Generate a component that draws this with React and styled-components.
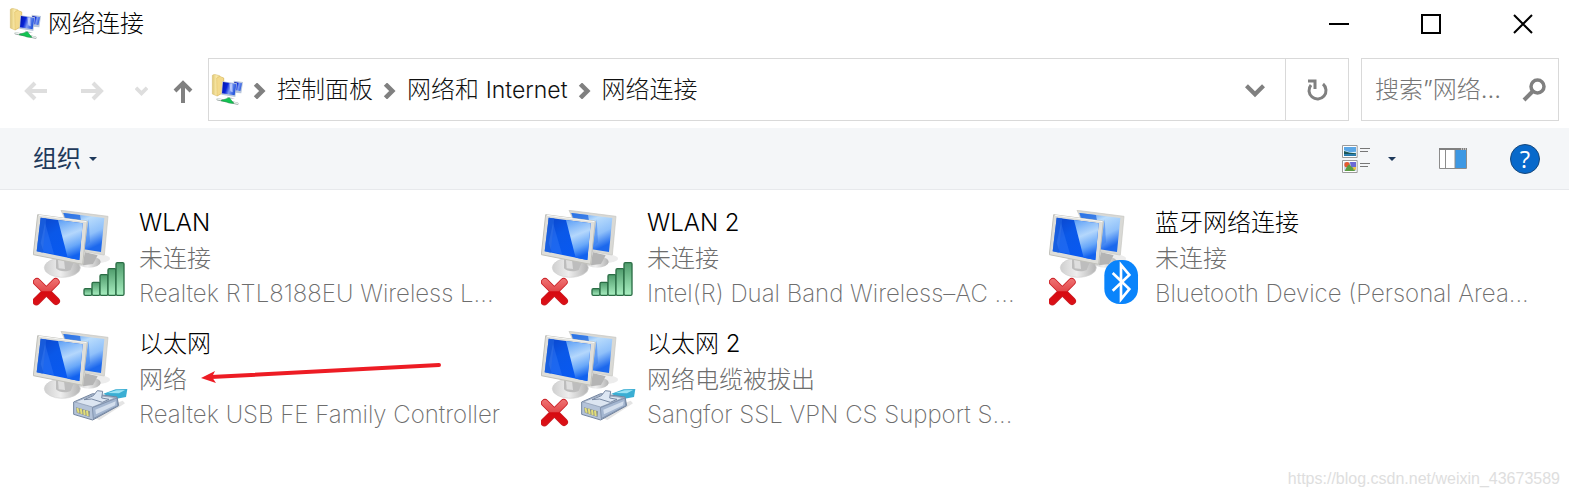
import React from "react";
import styled, { createGlobalStyle } from "styled-components";

const GlobalStyle = createGlobalStyle`
  *, *::before, *::after { box-sizing: border-box; }
  body {
    margin: 0;
    background: #fff;
    color: #000;
    font-family: Inter, "Noto Sans CJK SC", sans-serif;
    font-size: 24px;
    font-weight: 300;
  }
`;

const Window = styled.div`
  display: flex;
  flex-direction: column;
  min-height: 100vh;
`;

const TitleBar = styled.header`
  display: flex;
  align-items: center;
  height: 48px;
  padding-left: 9px;
  gap: 7px;
`;

const Title = styled.h1`
  flex: 1;
  margin: 0;
  font-size: 24px;
  font-weight: 300;
  line-height: 36px;
`;

const PlainButton = styled.button`
  display: flex;
  align-items: center;
  justify-content: center;
  flex: none;
  width: ${(p) => p.$width}px;
  height: 100%;
  padding: 0;
  border: 0;
  background: none;
  color: ${(p) => p.$color || "#808080"};
  font: inherit;
`;

const WindowControls = styled.div`
  display: flex;
  height: 100%;
`;

const NavBar = styled.nav`
  display: flex;
  height: 63px;
  margin: 10px 10px 7px 0;
`;

const History = styled.div`
  display: flex;
  align-items: center;
  padding: 2px 1px 0 7px;
`;

const AddressBar = styled.div`
  display: flex;
  align-items: center;
  flex: 1;
  min-width: 0;
  border: 1px solid #d9d9d9;
  margin-right: 12px;
`;

const Crumbs = styled.ol`
  display: flex;
  align-items: center;
  flex: 1;
  margin: 0;
  padding: 0 0 0 2px;
  list-style: none;
`;

const Crumb = styled.li`
  display: flex;
  align-items: center;
`;

const CrumbArrow = styled.span`
  display: flex;
  justify-content: center;
  width: 34px;
  padding-top: 2px;
`;

const CrumbLink = styled.a`
  color: #111;
  line-height: 36px;
  text-decoration: none;
  white-space: nowrap;
`;

const RefreshSlot = styled.div`
  height: 100%;
  border-left: 1px solid #d9d9d9;
`;

const SearchBox = styled.label`
  display: flex;
  align-items: center;
  width: 198px;
  padding-left: 13px;
  border: 1px solid #d9d9d9;
`;

const SearchInput = styled.input`
  flex: 1;
  min-width: 0;
  padding: 0;
  border: 0;
  outline: 0;
  background: none;
  font: inherit;
  &::placeholder { color: #767676; opacity: 1; }
`;

const Toolbar = styled.div`
  display: flex;
  align-items: center;
  justify-content: space-between;
  height: 62px;
  padding: 0 12px 0 33px;
  border-bottom: 1px solid #e7e9ec;
  background: #f4f6f8;
`;

const OrganizeButton = styled.button`
  display: flex;
  align-items: center;
  gap: 8px;
  padding: 0;
  border: 0;
  background: none;
  color: #1e395b;
  font: inherit;
  font-weight: 400;
  line-height: 36px;
`;

const ToolGroup = styled.div`
  display: flex;
  align-items: center;
  height: 100%;
`;

const ConnectionGrid = styled.ul`
  display: grid;
  grid-template-columns: repeat(3, 1fr);
  row-gap: 13px;
  margin: 0;
  padding: 15px 12px 0 33px;
  list-style: none;
`;

const Connection = styled.li`
  display: flex;
  position: relative;
  gap: 10px;
  min-width: 0;
`;

const IconSlot = styled.div`
  flex: none;
  width: 96px;
  padding-top: 5px;
`;

const Details = styled.div`
  min-width: 0;
  line-height: 36px;
  white-space: nowrap;
`;

const Name = styled.div`
  color: #000;
`;

const Info = styled.div`
  color: #6d6d6d;
`;

const Device = styled(Info)`
  font-weight: 200;
  line-height: 34px;
  padding-bottom: 2px;
`;

const Latin = styled.span`
  font-size: 23px;
`;

const ArrowOverlay = styled.svg`
  position: absolute;
  left: 164px;
  top: 32px;
`;

const Watermark = styled.footer`
  margin-top: auto;
  padding: 0 9px 8px;
  color: #dedede;
  font-family: "Liberation Sans", Arial, sans-serif;
  font-size: 16px;
  font-weight: 400;
  line-height: 20px;
  text-align: right;
`;

function FolderNetworkIcon() {
  return (
    <svg width="32" height="32" viewBox="0 0 96 96" aria-hidden="true">
      <defs>
        <linearGradient id="folder" x1="0" x2="1">
          <stop offset="0" stopColor="#ddc675" />
          <stop offset=".35" stopColor="#fbeaa9" />
          <stop offset="1" stopColor="#d9b85c" />
        </linearGradient>
        <linearGradient id="miniScreen" x1="0" y1="0" x2="1" y2=".3">
          <stop offset="0" stopColor="#0713a4" />
          <stop offset=".4" stopColor="#0624d8" />
          <stop offset=".65" stopColor="#7f9cf4" />
          <stop offset="1" stopColor="#2757dd" />
        </linearGradient>
      </defs>
      <path d="M4 4 10 1 26 5 27 10 38 12 39 55 18 66 4 60Z" fill="url(#folder)" stroke="#d5bb6d" strokeWidth="1.5" />
      <path d="M17 12 27 7 38 12 38 54 18 66Z" fill="#f3da8c" stroke="#cfaa4c" strokeWidth="1" />
      <path d="M68 20 96 24 91 58 70 56Z" fill="#b9c6dc" />
      <path d="M70 24 93 28 88 51 70 48Z" fill="url(#miniScreen)" />
      <path d="M34 22 78 28 73 69 31 62Z" fill="#b9c6dc" />
      <path d="M36 24 76 30 71 64 33 58Z" fill="url(#miniScreen)" />
      <path d="M55 28 64 29 65 55 58 52Z" fill="#dfe7ff" opacity=".65" />
      <path d="m48 68 14 3 10 3-22 1Z" fill="#c2c7ce" />
      <path d="m20 76 25 5 34 8" fill="none" stroke="#9ca8a4" strokeWidth="7" strokeLinecap="round" />
      <path d="m20 75 10 2M70 86l9 2" stroke="#edf4f1" strokeWidth="4" strokeLinecap="round" />
      <path d="m30 80 25-9 13 17-14-1-6-3Z" fill="#12c452" stroke="#079a3c" strokeWidth="1.5" />
    </svg>
  );
}

function ComputersIcon({ badge, offline }) {
  return (
    <svg width="96" height="96" viewBox="39 30 288 288" display="block" aria-hidden="true">
      <defs>
        <linearGradient id="screenDark" x1="0" y1="0" x2=".8" y2="1">
          <stop offset="0" stopColor="#0a43c8" />
          <stop offset=".4" stopColor="#0a58e8" />
          <stop offset="1" stopColor="#0759f5" />
        </linearGradient>
        <linearGradient id="screenLight" x1="0" y1="0" x2=".25" y2="1">
          <stop offset="0" stopColor="#5c9ff6" />
          <stop offset=".45" stopColor="#b4d7fc" />
          <stop offset=".75" stopColor="#69a8f9" />
          <stop offset="1" stopColor="#1262ef" />
        </linearGradient>
        <linearGradient id="screenBack" x1="0" y1="0" x2=".5" y2="1">
          <stop offset="0" stopColor="#2f7ef0" />
          <stop offset=".35" stopColor="#b9dcfc" />
          <stop offset=".7" stopColor="#8fc0fa" />
          <stop offset="1" stopColor="#1c68ed" />
        </linearGradient>
        <linearGradient id="stand" x1="0" x2="1">
          <stop offset="0" stopColor="#cfcfcf" />
          <stop offset=".45" stopColor="#eeeeee" />
          <stop offset="1" stopColor="#b3b3b3" />
        </linearGradient>
        <linearGradient id="crossFill" gradientUnits="userSpaceOnUse" x1="0" y1="235" x2="0" y2="316">
          <stop offset="0" stopColor="#ef7474" />
          <stop offset=".45" stopColor="#e34a4c" />
          <stop offset=".5" stopColor="#d60a10" />
          <stop offset="1" stopColor="#dc1118" />
        </linearGradient>
        <linearGradient id="barFill" x1="0" y1="0" x2="0" y2="1">
          <stop offset="0" stopColor="#4f9c6c" />
          <stop offset="1" stopColor="#a9efc1" />
        </linearGradient>
      </defs>
      <ellipse cx="222" cy="176" rx="48" ry="14" fill="#e4e4e4" opacity=".7" />
      <ellipse cx="207" cy="186" rx="35" ry="17" fill="url(#stand)" />
      <path d="m194 156 39 10-14 26-30 4Z" fill="#b4b4b4" />
      <path d="m123 31 141 18-11 116-75-12Z" fill="#d9d9d5" stroke="#c6c6c1" strokeWidth="2" />
      <path d="m130 39 123 15-10 102-56-9Z" fill="url(#screenBack)" />
      <path d="m130 39 50 6 3 18-48-6Z" fill="#276ee2" opacity=".8" />
      <path d="m206 58 4 69-17 15Z" fill="#387ff0" opacity=".55" />
      <ellipse cx="127" cy="203" rx="54" ry="29" fill="url(#stand)" stroke="#d2d2d2" strokeWidth="2" />
      <path d="m108 177 54 8-10 25c-15 7-36 4-44-5Z" fill="#bdbdbd" />
      <path d="m114 178 18 2 3 27-19-2Z" fill="#dedede" />
      <path d="m53 44 149 20-14 129L40 164Z" fill="#dededa" stroke="#c0c0ba" strokeWidth="3" />
      <path d="m62 53 126 17-10 110L50 154Z" fill="url(#screenDark)" />
      <path d="m114 60 74 10-10 110-35-7Z" fill="url(#screenLight)" />
      <path d="m62 53 17 2-11 103-18-4Z" fill="#1d61dd" opacity=".75" />
      <path d="m75 68 27 94-31-6-9-27Z" fill="#5795ff" opacity=".25" />
      <path d="m57 46 143 19" stroke="#f8f8f6" strokeWidth="3" />
      {offline && (
        <g fill="none" strokeLinecap="round">
          <path d="m51 246 57 57M107 246l-58 58" stroke="#c91c22" strokeWidth="24" />
          <path d="m51 246 57 57M107 246l-58 58" stroke="url(#crossFill)" strokeWidth="19" />
        </g>
      )}
      {badge === "signal" && (
        <g fill="url(#barFill)" stroke="#2b6d45" strokeWidth="4">
          {[20, 39, 62, 80, 98].map((h, i) => (
            <rect key={h} x={192 + i * 24} y={286 - h} width="24" height={h} rx="4" />
          ))}
        </g>
      )}
      {badge === "bluetooth" && (
        <g>
          <rect x="205" y="180" width="101" height="132" rx="46" fill="#0a84fb" />
          <path d="m230 219 50 48-25 31V195l25 30-50 47" fill="none" stroke="#fff" strokeWidth="8" />
        </g>
      )}
      {badge === "cable" && (
        <g strokeLinejoin="round">
          <path d="m250 262 58-23 7 8-77 50-20-8Z" fill="#c9c9c9" opacity=".5" />
          <path d="m250 218 37-13 35-1-4 24-36 7Z" fill="#3aaed3" />
          <path d="m262 216 27-8 26-1-18 10Z" fill="#9be3f4" />
          <path d="m161 243 57-25 73 10 5 26-78 43-57-17Z" fill="#b4c3d9" stroke="#74859f" strokeWidth="3" />
          <path d="m165 243 53-21 69 8-69 28Z" fill="#dce5f1" stroke="#8796ae" strokeWidth="2" />
          <path d="m217 260 74-29 2 23-73 39Z" fill="#a4b6d0" stroke="#6c7e9c" strokeWidth="2" />
          <path d="m226 266 61-25-2 12-57 27Z" fill="#d3deed" />
          <path d="m192 236 28-12 12-15 16 2-3 20 22 4-20 9-32-10Z" fill="#dce6f3" stroke="#7889a4" strokeWidth="3" />
          <path d="m168 259 42 12-1 17-39-13Z" fill="#8a938f" />
          <path d="m172 261 4 14M182 263l3 16M192 267l2 15M201 269l2 16" stroke="#e4df78" strokeWidth="6" />
        </g>
      )}
    </svg>
  );
}

function Chevron({ dir = "right", size = 14, color = "#808080", stroke = 4 }) {
  const d = dir === "right" ? "M3 1 9 7 3 13" : "M1 4 7 10 13 4";
  return (
    <svg width={size} height={size} viewBox="0 0 14 14" fill="none" stroke={color} strokeWidth={stroke} aria-hidden="true">
      <path d={d} />
    </svg>
  );
}

function StraightArrow({ dir, color }) {
  const d = {
    left: "M24 12H4M12 4 4 12l8 8",
    right: "M0 12h20M12 4l8 8-8 8",
    up: "M12 24V4M4 12l8-8 8 8",
  }[dir];
  return (
    <svg width="24" height="24" viewBox="0 0 24 24" fill="none" stroke={color} strokeWidth="4" aria-hidden="true">
      <path d={d} />
    </svg>
  );
}

function Caret() {
  return (
    <svg width="8" height="4" viewBox="0 0 8 4" aria-hidden="true">
      <path d="M0 0h8L4 4Z" fill="#1e395b" />
    </svg>
  );
}

function ViewIcon() {
  return (
    <svg width="28" height="28" viewBox="0 0 84 84" aria-hidden="true">
      <path d="M1.500 1.500h44v36h-44ZM1.500 46.500h44v36h-44Z" fill="#fff" stroke="#9b9b9b" strokeWidth="3" />
      <path d="M6 6h36v27H6Z" fill="#5ba7e6" />
      <path d="M6 16 24 22 42 20V27H6Z" fill="#d8f1fa" />
      <path d="m6 18 18 5 18 2v3H6Z" fill="#1b5658" />
      <path d="M6 28h36v5H6Z" fill="#2479aa" />
      <path d="M6 51h36v27H6Z" fill="#cbd8eb" />
      <path d="M24 51h18v15H27Z" fill="#6a68d5" />
      <circle cx="15" cy="59" r="8" fill="#e65a30" />
      <path d="m8 78 8-15 6-5 7 8 11 4-2 8Z" fill="#5b9b42" />
      <path d="M34 66h8v8h-8Z" fill="#f0c14a" />
      <path d="M54 10.500h30M54 19.500h24M54 55.500h30M54 64.500h24" stroke="#777" strokeWidth="3" />
    </svg>
  );
}

function PaneIcon() {
  return (
    <svg width="28" height="21" viewBox="0 0 28 21" aria-hidden="true">
      <path d="M.5.5h27v20H.5Z" fill="#fff" stroke="#8c8c8c" />
      <path d="M0 0h28v2H0Z" fill="#808080" />
      <path d="M22 1h1m1 0h1m1 0h1" stroke="#fff" />
      <path d="M6.500 2v18" stroke="#8c8c8c" />
      <path d="M16 2h11v18H16Z" fill="#3d98e3" />
      <path d="M16 2v18" stroke="#8c8c8c" />
    </svg>
  );
}

const HelpBadge = styled.span`
  display: flex;
  align-items: center;
  justify-content: center;
  width: 30px;
  height: 30px;
  border: 1px solid #17487c;
  border-radius: 50%;
  background: #0869cb;
  color: #fff;
  font-family: "Open Sans", sans-serif;
  font-size: 24px;
  font-weight: 500;
  line-height: 28px;
`;

const connections = [
  { name: "WLAN", status: "未连接", device: "Realtek RTL8188EU Wireless L...", badge: "signal", offline: true },
  { name: "WLAN 2", status: "未连接", device: "Intel(R) Dual Band Wireless–AC ...", badge: "signal", offline: true },
  { name: "蓝牙网络连接", status: "未连接", device: "Bluetooth Device (Personal Area...", badge: "bluetooth", offline: true },
  { name: "以太网", status: "网络", device: "Realtek USB FE Family Controller", badge: "cable", marked: true },
  { name: "以太网 2", status: "网络电缆被拔出", device: "Sangfor SSL VPN CS Support S...", badge: "cable", offline: true },
];

export default function App() {
  return (
    <Window>
      <GlobalStyle />
      <TitleBar>
        <FolderNetworkIcon />
        <Title>网络连接</Title>
        <WindowControls>
          <PlainButton $width={92} $color="#000" aria-label="最小化">
            <svg width="20" height="20" viewBox="0 0 20 20" stroke="currentColor" strokeWidth="2"><path d="M0 10h20" /></svg>
          </PlainButton>
          <PlainButton $width={92} $color="#000" aria-label="最大化">
            <svg width="20" height="20" viewBox="0 0 20 20" fill="none" stroke="currentColor" strokeWidth="2"><path d="M1 1h18v18H1Z" /></svg>
          </PlainButton>
          <PlainButton $width={92} $color="#000" aria-label="关闭">
            <svg width="20" height="20" viewBox="0 0 20 20" stroke="currentColor" strokeWidth="2"><path d="m1 1 18 18M19 1 1 19" /></svg>
          </PlainButton>
        </WindowControls>
      </TitleBar>

      <NavBar>
        <History>
          <PlainButton $width={56} aria-label="后退"><StraightArrow dir="left" color="#dedede" /></PlainButton>
          <PlainButton $width={60} aria-label="前进"><StraightArrow dir="right" color="#dedede" /></PlainButton>
          <PlainButton $width={36} aria-label="最近的位置"><Chevron dir="down" size={13} color="#dedede" /></PlainButton>
          <PlainButton $width={48} aria-label="向上"><StraightArrow dir="up" color="#808080" /></PlainButton>
        </History>
        <AddressBar>
          <Crumbs>
            <FolderNetworkIcon />
            <Crumb>
              <CrumbArrow><Chevron size={16} /></CrumbArrow>
              <CrumbLink href="#control-panel">控制面板</CrumbLink>
            </Crumb>
            <Crumb>
              <CrumbArrow><Chevron size={16} /></CrumbArrow>
              <CrumbLink href="#network">网络和 <Latin>Internet</Latin></CrumbLink>
            </Crumb>
            <Crumb>
              <CrumbArrow><Chevron size={16} /></CrumbArrow>
              <CrumbLink href="#connections">网络连接</CrumbLink>
            </Crumb>
          </Crumbs>
          <PlainButton $width={60} aria-label="以前的位置"><Chevron dir="down" size={20} stroke={3} /></PlainButton>
          <RefreshSlot>
            <PlainButton $width={62} aria-label="刷新">
              <svg width="22" height="22" viewBox="0 0 22 22" fill="none" stroke="currentColor" strokeWidth="3">
                <path d="M17 5A8.500 8.500 0 1 1 5 6" />
                <path d="M2 2h7v8" />
              </svg>
            </PlainButton>
          </RefreshSlot>
        </AddressBar>
        <SearchBox>
          <SearchInput type="text" aria-label="搜索" placeholder="搜索”网络..." />
          <PlainButton $width={48} aria-label="开始搜索">
            <svg width="24" height="24" viewBox="0 0 24 24" fill="none" stroke="currentColor">
              <circle cx="15.500" cy="8.500" r="6.500" strokeWidth="3.500" />
              <path d="m11 13-9 9" strokeWidth="4" />
            </svg>
          </PlainButton>
        </SearchBox>
      </NavBar>

      <Toolbar>
        <OrganizeButton>组织<Caret /></OrganizeButton>
        <ToolGroup>
          <PlainButton $width={30} aria-label="更改视图"><ViewIcon /></PlainButton>
          <PlainButton $width={42} aria-label="更多选项"><Caret /></PlainButton>
          <PlainButton $width={80} aria-label="预览窗格"><PaneIcon /></PlainButton>
          <PlainButton $width={64} aria-label="帮助"><HelpBadge>?</HelpBadge></PlainButton>
        </ToolGroup>
      </Toolbar>

      <ConnectionGrid>
        {connections.map((c) => (
          <Connection key={c.name}>
            <IconSlot><ComputersIcon badge={c.badge} offline={c.offline} /></IconSlot>
            <Details>
              <Name>{c.name}</Name>
              <Info>{c.status}</Info>
              <Device>{c.device}</Device>
            </Details>
            {c.marked && (
              <ArrowOverlay width="248" height="30" viewBox="0 0 248 30" aria-hidden="true">
                <path d="M14 19 242 7" stroke="#ed1c24" strokeWidth="4" strokeLinecap="round" />
                <path d="m4 20 14-7-3 6 4 6Z" fill="#ed1c24" />
              </ArrowOverlay>
            )}
          </Connection>
        ))}
      </ConnectionGrid>

      <Watermark>https://blog.csdn.net/weixin_43673589</Watermark>
    </Window>
  );
}
